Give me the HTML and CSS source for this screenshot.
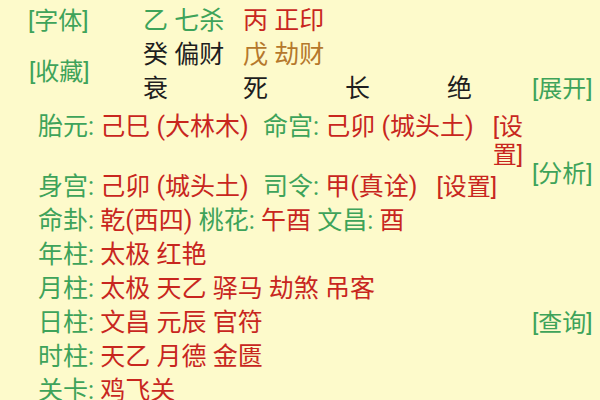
FILE: index.html
```html
<!DOCTYPE html>
<html lang="zh-CN">
<head>
<meta charset="utf-8">
<title>八字</title>
<link rel="stylesheet" href="styles.css">
</head>
<body>
<div class="page">
  <div class="top">
    <span class="link l-font">[字体]</span>
    <span class="cell c2 r-1 green">乙 七杀</span>
    <span class="cell c3 r-1 wide red">丙 正印</span>
    <span class="link l-fav">[收藏]</span>
    <span class="cell c2 r-2 dark">癸 偏财</span>
    <span class="cell c3 r-2 wide brown">戊 劫财</span>
    <span class="cell c2 r-3 dark">衰</span>
    <span class="cell c3 r-3 dark">死</span>
    <span class="cell c4 r-3 dark">长</span>
    <span class="cell c5 r-3 dark">绝</span>
    <span class="link l-open">[展开]</span>
  </div>

  <div class="bottom">
    <div class="row r1">
      <span class="text"><span class="k">胎元:</span> <span class="v">己巳 (大林木)</span> <span class="k k2">命宫:</span> <span class="v">己卯 (城头土)</span></span>
      <span class="link set">[设置]</span>
    </div>
    <div class="row">
      <span class="text"><span class="k">身宫:</span> <span class="v">己卯 (城头土)</span> <span class="k k2">司令:</span> <span class="v">甲(真诠)</span></span>
      <span class="link set">[设置]</span>
    </div>
    <div class="row">
      <span class="text"><span class="k">命卦:</span> <span class="v">乾(西四)</span> <span class="k">桃花:</span> <span class="v">午酉</span> <span class="k">文昌:</span> <span class="v">酉</span></span>
    </div>
    <div class="row">
      <span class="text"><span class="k">年柱:</span> <span class="v">太极 红艳</span></span>
    </div>
    <div class="row">
      <span class="text"><span class="k">月柱:</span> <span class="v">太极 天乙 驿马 劫煞 吊客</span></span>
    </div>
    <div class="row">
      <span class="text"><span class="k">日柱:</span> <span class="v">文昌 元辰 官符</span></span>
    </div>
    <div class="row">
      <span class="text"><span class="k">时柱:</span> <span class="v">天乙 月德 金匮</span></span>
    </div>
    <div class="row">
      <span class="text"><span class="k">关卡:</span> <span class="v">鸡飞关</span></span>
    </div>
    <span class="link l-ana">[分析]</span>
    <span class="link l-query">[查询]</span>
  </div>
</div>
</body>
</html>
```

FILE: styles.css
```css
html, body {
  margin: 0;
  padding: 0;
  background: #fdfacb;
}

body {
  font-family: Roboto, "Noto Sans CJK SC", sans-serif;
  font-size: 25px;
  line-height: 34px;
  color: #1e1e1e;
  width: 600px;
  height: 400px;
  overflow: hidden;
}

.page {
  padding-top: 4px;
}

.green { color: #3ea35a; }
.red { color: #c8261e; }
.brown { color: #b5782c; }
.dark { color: #1e1e1e; }

.link {
  color: #3ea35a;
  font-size: 24px;
  line-height: 28px;
}

/* top block */
.top {
  display: grid;
  grid-template-columns: 143px 100px 102px 102px 85px 1fr;
  grid-template-rows: repeat(3, 34px);
  align-items: center;
}

.top .cell {
  white-space: nowrap;
}

.c2 { grid-column: 2; }
.c3 { grid-column: 3; }
.c4 { grid-column: 4; }
.c5 { grid-column: 5; }
.r-1 { grid-row: 1; }
.r-2 { grid-row: 2; }
.r-3 { grid-row: 3; }

.top .wide {
  grid-column: 3 / span 3;
}

.l-font {
  grid-column: 1;
  grid-row: 1;
  padding-left: 28px;
}

.l-fav {
  grid-column: 1;
  grid-row: 2 / span 2;
  padding-left: 29px;
}

.l-open {
  grid-column: 6;
  grid-row: 3;
}

/* bottom block */
.bottom {
  margin-top: 4px;
  padding-left: 38px;
  display: grid;
  grid-template-columns: 494px 1fr;
  grid-template-rows: 60px repeat(7, 34px);
}

.row {
  grid-column: 1;
  display: flex;
  align-items: baseline;
}

.row .text {
  flex: none;
  white-space: nowrap;
}

.row .set {
  flex: 1 1 0;
  min-width: 0;
  margin-left: 19px;
  color: #c8261e;
}

.k { color: #3ea35a; }
.k2 { margin-left: 8px; }
.v { color: #c8261e; }

.l-ana {
  grid-column: 2;
  grid-row: 1 / span 3;
  align-self: center;
}

.l-query {
  grid-column: 2;
  grid-row: 4 / span 5;
  align-self: center;
}
```
